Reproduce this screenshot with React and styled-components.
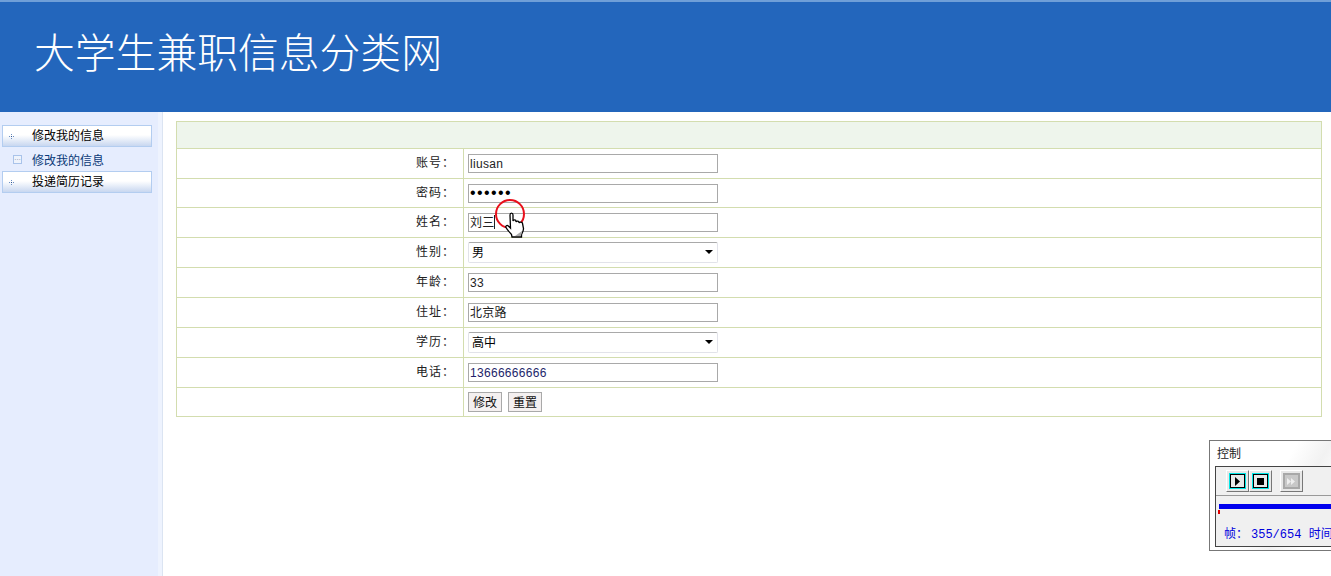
import React from "react";
import styled, { createGlobalStyle } from "styled-components";

const CJK = `"Liberation Sans", "Noto Sans CJK SC", sans-serif`;

const
	GlobalStyle = createGlobalStyle`
		html, body { margin: 0; padding: 0; background: #fff; }
		body { font: 12px ${CJK}; color: #000; overflow: hidden; }
	`,
	Page = styled.div`
		position: relative;
		width: 1331px;
		height: 576px;
		overflow: hidden;
		display: flex;
		flex-direction: column;
	`,
	Banner = styled.header`
		height: 85px;
		flex: none;
		background: #2366bc;
		border-top: 2px solid #6f9fd8;
		padding: 25px 0 0 34px;
	`,
	Title = styled.h1`
		margin: 0;
		font: 300 40.8px/48px "Noto Sans CJK SC", sans-serif;
		color: #fff;
		white-space: nowrap;
	`,
	Body = styled.div`
		flex: 1;
		display: flex;
		min-height: 0;
	`,
	Sidebar = styled.nav`
		width: 150px;
		flex: none;
		padding: 13px 6px 0 2px;
		background: #e6edfe;
		border-right: 4px solid #eef3fe;
		box-shadow: 1px 0 0 #dbe4f2;
	`,
	MenuHead = styled.div`
		height: 20px;
		display: flex;
		align-items: center;
		border: 1px solid #b3cdf0;
		background: linear-gradient(#fff 0%, #fff 45%, #c8d7f0 100%);
		line-height: 20px;
	`,
	MenuDots = styled.svg`
		width: 5px;
		height: 5px;
		margin: 0 18px 0 6px;
		flex: none;
	`,
	MenuRow = styled.div`
		height: 24px;
		display: flex;
		align-items: center;
		color: #0a3a78;
	`,
	LeafBox = styled.span`
		width: 7px;
		height: 7px;
		margin: 0 10px 0 11px;
		border: 1px solid #a9c3ea;
		background: #eef3fc;
		color: #6a7fa0;
		font-size: 7px;
		line-height: 4px;
		text-align: center;
		overflow: hidden;
		flex: none;
	`,
	Main = styled.main`
		flex: 1;
		padding: 9px 9px 0 14px;
		min-width: 0;
	`,
	FormTable = styled.div`
		border: 1px solid #d3ddaf;
		border-bottom: 0;
		display: grid;
		grid-template-columns: 287px 1fr;
	`,
	HeadBar = styled.div`
		grid-column: 1 / 3;
		height: 26px;
		background: #eef5ec;
		border-bottom: 1px solid #d3ddaf;
	`,
	Label = styled.label`
		height: ${p => p.$h - 5}px;
		border-bottom: 1px solid #d3ddaf;
		border-right: 1px solid #d3ddaf;
		display: flex;
		align-items: center;
		justify-content: flex-end;
		padding: 0 8px 4px 0;
		color: #222;
		letter-spacing: 1px;
	`,
	Field = styled.div`
		height: ${p => p.$h - 1}px;
		border-bottom: 1px solid #d3ddaf;
		display: flex;
		align-items: center;
		gap: 6px;
		padding-left: 4px;
	`,
	TextInput = styled.input`
		width: 250px;
		height: 19px;
		box-sizing: border-box;
		border: 1px solid #a9a9a9;
		padding: 0 1px ${p => p.$lift}px;
		font: ${p => p.type === "password" ? "16px" : "12px"} ${CJK};
		color: ${p => p.$tone || "#222"};
		outline: none;
		background: #fff;
		letter-spacing: ${p => p.type === "password" ? "1.4px" : "0.3px"};
	`,
	SelectWrap = styled.div`
		position: relative;
		width: 250px;
		height: 21px;
		&::after {
			content: "";
			position: absolute;
			right: 5px;
			top: 8px;
			border: 4px solid transparent;
			border-top-color: #000;
			pointer-events: none;
		}
	`,
	Select = styled.select`
		appearance: none;
		width: 100%;
		height: 100%;
		box-sizing: border-box;
		border: 1px solid #e2e3ea;
		border-top-color: #a9a9a9;
		border-radius: 2px;
		padding: 0 3px;
		background: #fff;
		font: 12px ${CJK};
		color: #000;
		outline: none;
	`,
	Button = styled.button`
		width: 34px;
		height: 20px;
		padding: 0 0 3px;
		box-sizing: border-box;
		border: 1px solid #a9a9a9;
		background: #f4f0f0;
		font: 12px ${CJK};
		color: #111;
	`,
	Caret = styled.span`
		position: absolute;
		left: 494px;
		top: 215px;
		width: 1px;
		height: 14px;
		background: #222;
	`,
	Pointer = styled.svg`
		position: absolute;
		left: 494px;
		top: 198px;
		width: 34px;
		height: 40px;
		overflow: visible;
	`,
	ControlPanel = styled.aside`
		position: absolute;
		left: 1209px;
		top: 440px;
		width: 160px;
		height: 111px;
		box-sizing: border-box;
		border: 1px solid #777;
		background: linear-gradient(120deg, #fff 0%, #fff 40%, #f2f2f2 55%, #fff 70%);
		padding: 6px 5px 5px;
	`,
	ControlTitle = styled.div`
		line-height: 14px;
		height: 19px;
		padding-left: 2px;
		color: #222;
	`,
	ControlInner = styled.div`
		height: 79px;
		border: 1px solid #444;
		background: #f0f0f0;
	`,
	ControlBar = styled.div`
		height: 28px;
		display: flex;
		align-items: center;
		padding-left: 10px;
		border-bottom: 1px solid #999;
	`,
	CtlButton = styled.span`
		width: 23px;
		height: 22px;
		box-sizing: border-box;
		margin-right: ${p => p.$gap || 0}px;
		display: flex;
		align-items: center;
		justify-content: center;
		background: #e8e8e8;
		border: 1px solid;
		border-color: #fff #777 #777 #fff;
	`,
	CtlFace = styled.span`
		width: 17px;
		height: 16px;
		box-sizing: border-box;
		border: 1px solid ${p => p.$off ? "#a8a8a8" : "#00e5e5"};
		box-shadow: inset 0 0 0 1px ${p => p.$off ? "#a8a8a8" : "#000"};
		display: flex;
		align-items: center;
		justify-content: center;
		background: ${p => p.$off ? "#c8c8c8" : "#e8e8e8"};
	`,
	Track = styled.div`
		position: relative;
		height: 20px;
		&::before {
			content: "";
			position: absolute;
			left: 3px;
			top: 8px;
			width: 200px;
			height: 5px;
			background: #0000ee;
		}
		&::after {
			content: "";
			position: absolute;
			left: 2px;
			top: 14px;
			width: 2px;
			height: 4px;
			background: #e00000;
		}
	`,
	Status = styled.div`
		padding: 12px 0 0 8px;
		font: 12px "Liberation Mono", "Noto Sans CJK SC", monospace;
		line-height: 14px;
		color: #0000dd;
		white-space: nowrap;
	`,
	StatusKey = styled.span`
		margin-right: 3px;
	`;

// lift nudges the input text up, the CJK values sit lower than the latin ones
const rows = [
	{ label: "账号：", h: 30, value: "liusan", lift: 0 },
	{ label: "密码：", h: 29, value: "123456", type: "password", tone: "#000", lift: 1 },
	{ label: "姓名：", h: 30, value: "刘三", lift: 3 },
	{ label: "性别：", h: 30, options: [ "男", "女" ] },
	{ label: "年龄：", h: 30, value: "33", lift: 0 },
	{ label: "住址：", h: 30, value: "北京路", lift: 3 },
	{ label: "学历：", h: 30, options: [ "高中", "本科" ] },
	{ label: "电话：", h: 30, value: "13666666666", tone: "#231f6a", lift: 0 }
];

const Dots = () => (
	<MenuDots viewBox="0 0 5 5">
		<path d="M2 0h1v1H2zM0 2h1v1H0zM4 2h1v1H4zM2 4h1v1H2z" fill="#6b8fc4" />
		<path d="M2 2h1v1H2z" fill="#32558c" />
	</MenuDots>
);

const App = () => (
	<Page>
		<GlobalStyle />
		<Banner>
			<Title>大学生兼职信息分类网</Title>
		</Banner>
		<Body>
			<Sidebar>
				<MenuHead><Dots />修改我的信息</MenuHead>
				<MenuRow><LeafBox>…</LeafBox>修改我的信息</MenuRow>
				<MenuHead><Dots />投递简历记录</MenuHead>
			</Sidebar>
			<Main>
				<FormTable>
					<HeadBar />
					{rows.map( row => (
						<React.Fragment key={row.label}>
							<Label $h={row.h}>{row.label}</Label>
							<Field $h={row.h}>
								{row.options
									? <SelectWrap>
										<Select defaultValue={row.options[ 0 ]}>
											{row.options.map( o => <option key={o}>{o}</option> )}
										</Select>
									</SelectWrap>
									: <TextInput
										type={row.type || "text"}
										defaultValue={row.value}
										$tone={row.tone}
										$lift={row.lift}
										readOnly
									/>}
							</Field>
						</React.Fragment>
					))}
					<Label $h={29} />
					<Field $h={29}>
						<Button>修改</Button>
						<Button>重置</Button>
					</Field>
				</FormTable>
			</Main>
		</Body>
		<Caret />
		<Pointer viewBox="0 0 34 40">
			<circle cx="16" cy="16" r="14" fill="none" stroke="#e8101c" strokeWidth="2" />
			<path
				d="M16 17c0-2.500 3-2.500 3 0v6c.5-1.500 3-1.500 3 .3v.7c.5-1.300 3-1.300 3 .3v.7c.5-1.200 3.500-1.200 3.500 .5l1 5c.2 2-1 4-2 6v2.500h-9.500l-.5-2.500c-1.500-2-4-4-5.500-7-.8-1.500 1-2.800 2.300-1.500l2.200 2.200z"
				fill="#fff"
				stroke="#000"
				strokeWidth="1.300"
			/>
			<path d="M28 33l-1 5h-6z" fill="#aaa" />
		</Pointer>
		<ControlPanel>
			<ControlTitle>控制</ControlTitle>
			<ControlInner>
				<ControlBar>
					<CtlButton>
						<CtlFace>
							<svg width="7" height="9" viewBox="0 0 7 9"><path d="M1 0l5 4.500-5 4.500z" fill="#000" /></svg>
						</CtlFace>
					</CtlButton>
					<CtlButton $gap={8}>
						<CtlFace>
							<svg width="7" height="7" viewBox="0 0 7 7"><path d="M0 0h7v7H0z" fill="#000" /></svg>
						</CtlFace>
					</CtlButton>
					<CtlButton>
						<CtlFace $off>
							<svg width="9" height="7" viewBox="0 0 9 7"><path d="M0 0l4 3.500-4 3.500zM4 0l4 3.500-4 3.500z" fill="#eee" /></svg>
						</CtlFace>
					</CtlButton>
				</ControlBar>
				<Track />
				<Status><StatusKey>帧：</StatusKey>355/654 时间</Status>
			</ControlInner>
		</ControlPanel>
	</Page>
);

export default App;
